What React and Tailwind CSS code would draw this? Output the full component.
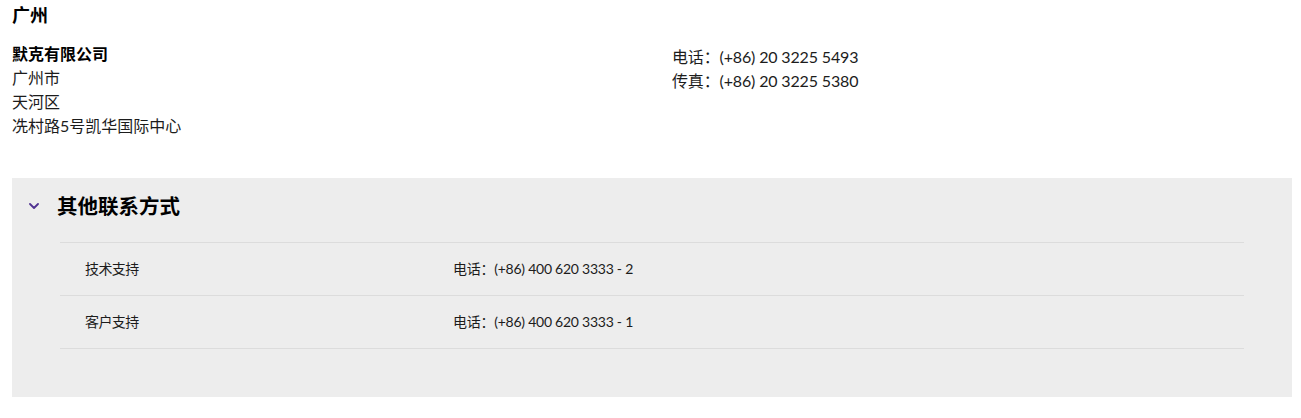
const FONT = { fontFamily: 'Lato, "Noto Sans CJK SC", sans-serif' };

const offices = {
  city: '广州',
  company: '默克有限公司',
  address: ['广州市', '天河区', '冼村路5号凯华国际中心'],
  phones: ['电话：(+86) 20 3225 5493', '传真：(+86) 20 3225 5380'],
};

const otherContacts = [
  { label: '技术支持', phone: '电话：(+86) 400 620 3333 - 2' },
  { label: '客户支持', phone: '电话：(+86) 400 620 3333 - 1' },
];

const App = () => {
  return (
    <div className="min-h-screen bg-white text-[#1c1c1c]" style={FONT}>
      <div className="pl-3 pr-[9px]">
        <h2 className="text-[18px] leading-[30px] font-bold text-black">{offices.city}</h2>

        {/* Office address + numbers */}
        <div className="grid grid-cols-[660px_1fr] mt-3 text-[16px] leading-6">
          <div>
            <p className="font-bold text-black">{offices.company}</p>
            {offices.address.map((line) => (
              <p key={line}>{line}</p>
            ))}
          </div>
          <div className="pt-[3px] tracking-[-0.15px]">
            {offices.phones.map((line) => (
              <p key={line}>{line}</p>
            ))}
          </div>
        </div>

        {/* Accordion: other contacts */}
        <div className="mt-10 bg-[#ededed] pb-12">
          <div className="flex items-center pt-[13px] pb-[21px]">
            <span className="w-[45px] flex justify-center">
              <svg className="w-[10px] h-[6px] ml-[-1px]" viewBox="0 0 10 6" fill="none">
                <path d="M1 1l4 4 4-4" stroke="#503291" strokeWidth="1.8" strokeLinecap="round" strokeLinejoin="round" />
              </svg>
            </span>
            <h3 className="text-[20.5px] leading-[30px] font-bold text-black">其他联系方式</h3>
          </div>

          <div className="mx-12 border-b border-[#dcdcdc]">
            {otherContacts.map((item) => (
              <div
                key={item.label}
                className="flex items-center h-[53px] border-t border-[#dcdcdc] pl-[25px] text-[14px] pb-px"
              >
                <span className="w-[368px] tracking-[-0.6px]">{item.label}</span>
                <span className="tracking-[-0.25px]">{item.phone}</span>
              </div>
            ))}
          </div>
        </div>
      </div>
    </div>
  );
};

export default App;
